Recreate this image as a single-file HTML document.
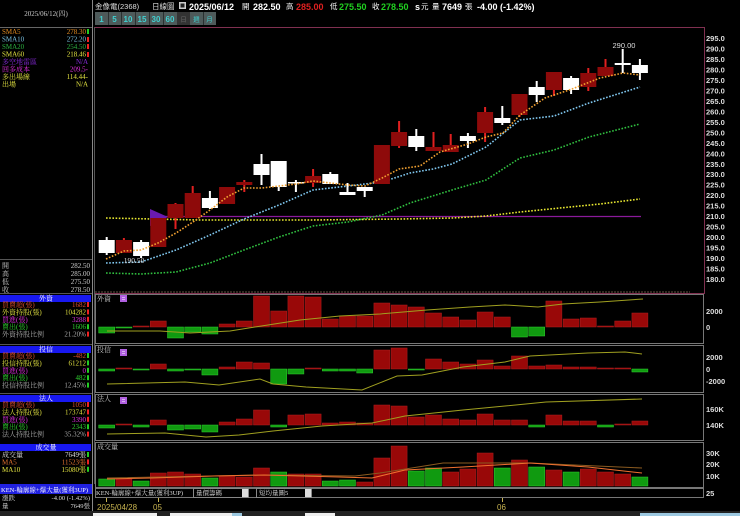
<!DOCTYPE html>
<html><head><meta charset="utf-8"><style>
html,body{margin:0;padding:0;background:#000;width:740px;height:516px;overflow:hidden}
svg{display:block;font-family:"Liberation Sans","Noto Sans CJK TC",sans-serif}
</style></head><body>
<svg id="s" width="740" height="516" viewBox="0 0 740 516" xmlns="http://www.w3.org/2000/svg">
<rect width="740" height="516" fill="#000"/>
<line x1="92.5" y1="0" x2="92.5" y2="511" stroke="#888"/>
<line x1="0" y1="27.5" x2="92" y2="27.5" stroke="#666"/>
<text x="46" y="16" fill="#ccc" font-size="7" text-anchor="middle" font-family="Liberation Serif,Noto Serif CJK SC,serif">2025/06/12(四)</text>
<g font-size="7" font-family="Liberation Serif,Noto Serif CJK SC,serif">
<text x="2" y="34" fill="#e08a20">SMA5</text><text x="86" y="34" fill="#e08a20" text-anchor="end">278.30</text><rect x="87" y="29" width="2" height="5" fill="#2c2"/>
<text x="2" y="41.5" fill="#7ac0e0">SMA10</text><text x="86" y="41.5" fill="#7ac0e0" text-anchor="end">272.20</text><rect x="87" y="37" width="2" height="5" fill="#e22"/>
<text x="2" y="49" fill="#2cb040">SMA20</text><text x="86" y="49" fill="#2cb040" text-anchor="end">254.50</text><rect x="87" y="44" width="2" height="5" fill="#e22"/>
<text x="2" y="56.5" fill="#e0e040">SMA60</text><text x="86" y="56.5" fill="#e0e040" text-anchor="end">218.46</text><rect x="87" y="52" width="2" height="5" fill="#e22"/>
<text x="2" y="64" fill="#8a2ae0">多空地雷區</text><text x="88" y="64" fill="#8a2ae0" text-anchor="end">N/A</text>
<text x="2" y="71.5" fill="#e030e0">回多成本</text><text x="88" y="71.5" fill="#e030e0" text-anchor="end">209.5-</text>
<text x="2" y="79" fill="#e0e040">多出場線</text><text x="88" y="79" fill="#e0e040" text-anchor="end">114.44-</text>
<text x="2" y="86.5" fill="#e0e040">出場</text><text x="88" y="86.5" fill="#e0e040" text-anchor="end">N/A</text>
<line x1="0" y1="259.5" x2="92" y2="259.5" stroke="#555"/>
<text x="2" y="268" fill="#ccc">開</text><text x="90" y="268" fill="#ccc" text-anchor="end">282.50</text>
<text x="2" y="276" fill="#ccc">高</text><text x="90" y="276" fill="#ccc" text-anchor="end">285.00</text>
<text x="2" y="284" fill="#ccc">低</text><text x="90" y="284" fill="#ccc" text-anchor="end">275.50</text>
<text x="2" y="292" fill="#ccc">收</text><text x="90" y="292" fill="#ccc" text-anchor="end">278.50</text>
</g>
<g id="lp" font-size="7" font-family="Liberation Serif,Noto Serif CJK SC,serif"></g>
<g font-size="9" font-weight="bold" fill="#fff">
<text x="95" y="9" font-size="7.5" font-weight="normal" fill="#ddd">金像電(2368)</text>
<text x="152" y="9" font-size="7.5" font-weight="normal" fill="#ddd">日線圖</text>
<rect x="179" y="2" width="7" height="7" fill="#ccc"/><rect x="180.5" y="3.5" width="4" height="4" fill="#222"/>
<text x="189" y="10">2025/06/12</text>
<text x="242" y="9" font-size="7.5" font-weight="normal">開</text><text x="253" y="10">282.50</text>
<text x="286" y="9" font-size="7.5" font-weight="normal">高</text><text x="296" y="10" fill="#e02020">285.00</text>
<text x="330" y="9" font-size="7.5" font-weight="normal">低</text><text x="339" y="10" fill="#20d020">275.50</text>
<text x="372" y="9" font-size="7.5" font-weight="normal">收</text><text x="381" y="10" fill="#20d020">278.50</text>
<text x="415" y="10">s</text><text x="421" y="9" font-size="7.5" font-weight="normal">元</text>
<text x="432" y="9" font-size="7.5" font-weight="normal">量</text><text x="442" y="10">7649</text><text x="465" y="9" font-size="7.5" font-weight="normal">張</text>
<text x="477" y="10">-4.00 (-1.42%)</text>
</g>
<g font-size="8" font-weight="bold" fill="#40d0d0" text-anchor="middle">
<rect x="95" y="12" width="121" height="13" fill="#4e5a5a"/>
<rect x="177" y="12" width="13" height="13" fill="#333"/>
<g stroke="#2a3030"><line x1="108.5" y1="12" x2="108.5" y2="25"/><line x1="121.5" y1="12" x2="121.5" y2="25"/><line x1="135.5" y1="12" x2="135.5" y2="25"/><line x1="149.5" y1="12" x2="149.5" y2="25"/><line x1="163.5" y1="12" x2="163.5" y2="25"/><line x1="203.5" y1="12" x2="203.5" y2="25"/></g>
<text x="101.5" y="22">1</text><text x="114.5" y="22">5</text><text x="128" y="22">10</text><text x="142" y="22">15</text><text x="156" y="22">30</text><text x="170" y="22">60</text>
<text x="183.5" y="21.5" fill="#666" font-size="6.5" font-weight="normal">日</text><text x="196.5" y="21.5" font-size="6.5" font-weight="normal">週</text><text x="209.5" y="21.5" font-size="6.5" font-weight="normal">月</text>
</g>
<rect x="94.5" y="27.5" width="610" height="266" fill="none" stroke="#803050"/>
<line x1="94.5" y1="27" x2="94.5" y2="484" stroke="#555"/>
<g fill="none" stroke="#777">
<rect x="95.5" y="294.5" width="608" height="49"/>
<rect x="95.5" y="345.5" width="608" height="47"/>
<rect x="95.5" y="394.5" width="608" height="46"/>
<rect x="95.5" y="442.5" width="608" height="45"/>
<rect x="95.5" y="488.5" width="608" height="9"/>
</g>
<line x1="95" y1="292" x2="690" y2="292" stroke="#665544" stroke-dasharray="2 1"/>
<g id="g"></g>
<g font-size="7" fill="#ccc" font-family="Liberation Serif,Noto Serif CJK SC,serif">
<text x="97" y="301">外資</text><text x="97" y="352">投信</text><text x="97" y="401">法人</text><text x="97" y="449">成交量</text>
</g>
<g fill="#b060e0"><rect x="120" y="295" width="7" height="7"/><rect x="120" y="349" width="7" height="7"/><rect x="120" y="397" width="7" height="7"/></g>
<g fill="#fff" opacity=".5"><rect x="122" y="297" width="3" height="1"/><rect x="122" y="299" width="3" height="1"/><rect x="122" y="351" width="3" height="1"/><rect x="122" y="353" width="3" height="1"/><rect x="122" y="399" width="3" height="1"/><rect x="122" y="401" width="3" height="1"/></g>
<g id="ax" font-size="7.5" font-weight="bold" fill="#ddd"></g>
<g font-size="7.5" font-weight="bold" fill="#ddd">
<text x="706" y="314">2000</text><text x="706" y="330">0</text>
<text x="706" y="360">2000</text><text x="706" y="372">0</text><text x="706" y="384">-2000</text>
<text x="706" y="412">160K</text><text x="706" y="428">140K</text>
<text x="706" y="456">30K</text><text x="706" y="467">20K</text><text x="706" y="479">10K</text><text x="706" y="496">25</text>
<text x="624" y="48" text-anchor="middle" font-weight="normal">290.00</text>
<text x="134" y="263" text-anchor="middle" font-weight="normal" font-family="Liberation Serif,serif">190.50</text>
</g>
<rect x="0" y="484" width="92" height="10" fill="#2020e0"/>
<g font-size="6.5" fill="#ddd" font-family="Liberation Serif,Noto Serif CJK SC,serif">
<text x="1" y="492" fill="#fff">KEN-輪廓線+爆大量(獲利3UP)</text>
<text x="96" y="495">KEN-輪廓線+爆大量(獲利3UP)</text>
<text x="2" y="500">漲跌</text><text x="90" y="500" text-anchor="end">-4.00 (-1.42%)</text>
<text x="2" y="508">量</text><text x="90" y="508" text-anchor="end">7649張</text>
</g>
<rect x="193.5" y="488.5" width="55" height="9" fill="#000" stroke="#888"/>
<rect x="242" y="489" width="6" height="8" fill="#ddd"/>
<rect x="256.5" y="488.5" width="55" height="9" fill="#000" stroke="#888"/>
<rect x="305" y="489" width="6" height="8" fill="#ddd"/>
<g font-size="6.5" fill="#ddd" font-family="Liberation Serif,Noto Serif CJK SC,serif"><text x="196" y="495">量價籌碼</text><text x="259" y="495">短均量圖5</text></g>
<g stroke="#c8b450"><line x1="106.5" y1="498" x2="106.5" y2="502"/><line x1="158.5" y1="498" x2="158.5" y2="502"/><line x1="502.5" y1="498" x2="502.5" y2="502"/></g>
<g font-size="8" fill="#c8b450"><text x="97" y="510">2025/04/28</text><text x="153" y="510">05</text><text x="497" y="510">06</text></g>
<rect x="0" y="511" width="740" height="5" fill="#222"/>
<rect x="93" y="513" width="64" height="3" fill="#eee"/><rect x="170" y="513" width="62" height="3" fill="#eee"/><rect x="232" y="513" width="10" height="3" fill="#9cc8e0"/>
<rect x="305" y="513" width="30" height="3" fill="#eee"/><rect x="640" y="513" width="100" height="3" fill="#9cc8e0"/>
</svg>
<script>
var NS="http://www.w3.org/2000/svg",g=document.getElementById('g');
function el(t,a,p){var e=document.createElementNS(NS,t);for(var k in a)e.setAttribute(k,a[k]);(p||g).appendChild(e);return e;}
function cx(i){return 106.7+17.2*i;}
var ax=document.getElementById('ax');
for(var k=0;k<24;k++){var p=295-5*k;var t=el('text',{x:706,y:41+10.48*k},ax);t.textContent=p.toFixed(1);}
function pl(pts,c){el('polyline',{points:pts,fill:'none',stroke:c,'stroke-width':1.6,'stroke-dasharray':'1.6 1.6'});}
el('line',{x1:150,y1:216.5,x2:641,y2:216.5,stroke:'#8a1a9a','stroke-width':1.2});
el('polygon',{points:'150,209 168,217 150,226',fill:'#6a1ab0'});
pl("106,218 200,220 313,220 400,219 452,218 486,216 520,212 560,208 600,204 640,199",'#e8e830');
pl("106,273 141,274 176,272 210,263 244,250 279,237 313,226 348,222 382,215 410,203 452,190 486,180 520,158 554,150 589,137 640,124",'#30c040');
pl("106,263 141,262 176,250 210,235 244,219 279,205 313,190 348,186 382,182 410,173 433,169 452,164 486,147 520,120 554,116 589,103 640,87",'#80c8f0');
var C=[['w',240,253,237,255],['r',240,253,238,253],['w',242,256,240,258],['r',218,247,218,247],['r',204,218,203,229],['r',193,218,186,218],['w',198,208,191,209],['r',187,204,187,204],['r',182,185,180,192],['w',164,175,154,185],['w',161,187,161,191],['w',182,183.5,180,192],['r',176,183,169,187],['w',174,184,172,184],['w',192,195,183,195],['w',187,191,187,197],['r',145,184,145,184],['r',132,146,121,148],['w',136,147,129,151],['r',147,151,132,150],['r',145,152,134,152],['w',136,141,133,148],['r',112,133,107,142],['w',118,123,106,125],['r',94,115,94,117],['w',87,95,81,102],['r',72,90,72,96],['w',78,90,76,94],['r',73,87,68,91],['r',67,76,59,76],['w',63,65,49,73],['w',65,73,59,80]];
C.forEach(function(c,i){var x=cx(i);var w=c[0]=='w';
 el('rect',{x:x-1,y:c[3],width:2,height:c[4]-c[3],fill:w?'#fff':'#e02020'});
 el('rect',{x:x-8,y:c[1],width:16,height:Math.max(1.5,c[2]-c[1]),fill:w?'#fff':'#8e0a0a'});});
pl("106,259 124,251 141,250 158,243 176,233 193,222 210,210 227,197 244,188 262,188 279,186 296,184 313,181 330,183 348,185 365,186 382,178 399,169 420,166 440,152 468,144 486,137 503,133 520,115 545,98 572,89 600,78 623,73 640,75",'#f0a030');
function bars(z,v){v.forEach(function(t,i){var x=cx(i)-8;
 if(t<0){el('rect',{x:x,y:z,width:16,height:Math.max(1,-t),fill:'#109a10',stroke:'#30d030','stroke-width':.5});}
 else{el('rect',{x:x,y:z-t,width:16,height:Math.max(1,t),fill:'#990808',stroke:'#b02020','stroke-width':.5});}});}
function vbars(z,v){v.forEach(function(t,i){var x=cx(i)-8,h=Math.abs(t);
 el('rect',{x:x,y:z-h,width:16,height:h,fill:t<0?'#109a10':'#990808',stroke:t<0?'#30d030':'#b02020','stroke-width':.5});});}
bars(327,[-6,-1,1,6,-11,-5,-7,3,6,31,16,31,30,8,11,11,24,22,20,14,10,7,15,10,-10,-9,26,8,9,1,6,14]);
bars(369,[-2,1,-1,5,-2,-1,-6,2,7,6,-15,-5,1,-2,-2,-4,19,21,-1,10,7,5,9,3,13,3,4,2,2,1,1,-3]);
bars(425,[-3,1,-2,5,-5,-4,-7,3,6,15,-2,10,11,2,3,2,20,19,8,10,6,5,11,5,5,-2,10,4,4,-2,1,4]);
vbars(486,[-7,7,-5,13,14,12,-8,10,9,18,-14,12,12,-5,-6,4,28,40,-15,-18,14,17,33,-18,26,-19,16,-14,17,14,12,-9]);
function ln(p,c){el('polyline',{points:p,fill:'none',stroke:c,'stroke-width':1});}
ln("107,331 160,331 190,333 230,331 255,327 300,320 340,316 380,314 427,310 470,307 505,305 538,307 563,304 600,302 643,299",'#a0a020');
ln("107,384 185,382 219,385 260,379 273,384 306,387 362,390 397,376 422,375 463,367 505,362 530,356 588,353 625,352 642,354",'#a0a020');
ln("107,434 165,433 206,437 239,435 273,431 322,426 372,423 405,416 463,410 505,406 546,402 642,399",'#a0a020');
ln("107,478 264,475 355,476 380,473 443,463 530,463 642,468",'#8a5a20');
ln("107,479 152,478 214,476 264,475 339,477 372,478 405,470 463,467 530,463 588,467 642,473",'#f07030');
var lp=document.getElementById('lp');
function tx(x,y,s,c,a){var t=el('text',{x:x,y:y,fill:c},lp);if(a)t.setAttribute('text-anchor','end');t.textContent=s;}
function sec(y,title,rows){el('rect',{x:0,y:y-3,width:91,height:7,fill:'#1818f0'},lp);tx(46,y+2.5,title,'#fff');lp.lastChild.setAttribute('text-anchor','middle');
 var col=['#e05030','#e0e040','#e030e0','#30d030','#aaa'];
 rows.forEach(function(r,i){var yy=y+9+7.4*i;tx(2,yy,r[0],r[2]||col[i]);tx(86,yy,r[1],r[2]||col[i],1);
 el('rect',{x:87,y:yy-5,width:2,height:5,fill:r[3]?'#2c2':'#e22'},lp);});
 el('line',{x1:0,y1:y-4.5,x2:92,y2:y-4.5,stroke:'#555'},lp);}
sec(298,'外資',[['買賣超(張)','1682'],['外資持股(張)','104282'],['買進(張)','3288'],['賣出(張)','1606',0,1],['外資持股比例','21.20%']]);
sec(349,'投信',[['買賣超(張)','-482',0,1],['投信持股(張)','61212',0,1],['買進(張)','0',0,1],['賣出(張)','482',0,1],['投信持股比例','12.45%',0,1]]);
sec(398,'法人',[['買賣超(張)','1050'],['法人持股(張)','173747'],['買進(張)','3390'],['賣出(張)','2343',0,1],['法人持股比例','35.32%']]);
el('rect',{x:0,y:444,width:91,height:7,fill:'#1818f0'},lp);tx(46,449.5,'成交量','#fff');lp.lastChild.setAttribute('text-anchor','middle');
[['成交量','7649張','#ddd',1],['MA5','11523張','#e07030'],['MA10','15080張','#e0e040',1]].forEach(function(r,i){var yy=457+7.4*i;tx(2,yy,r[0],r[2]);tx(86,yy,r[1],r[2],1);el('rect',{x:87,y:yy-5,width:2,height:5,fill:r[3]?'#2c2':'#e22'},lp);});
</script>
</body></html>
